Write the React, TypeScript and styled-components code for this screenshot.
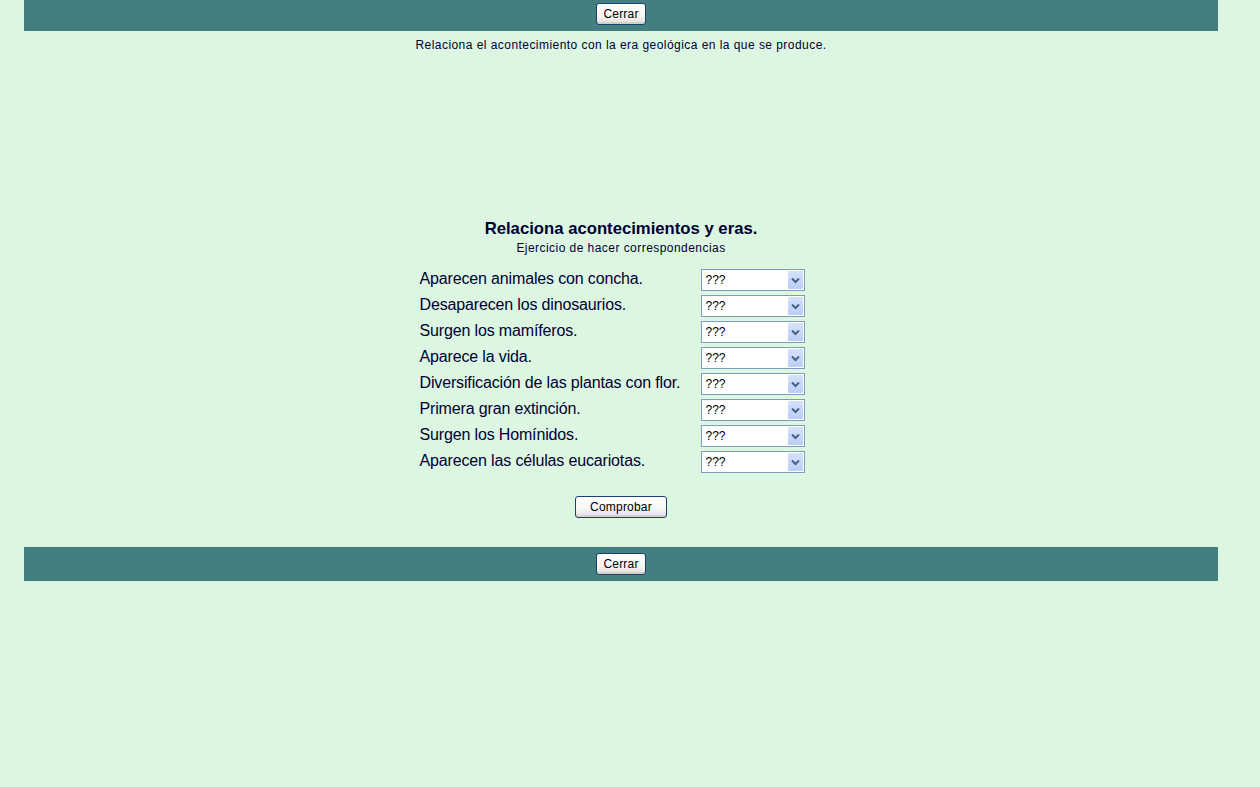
import React from "react";
import styled, { createGlobalStyle } from "styled-components";

const events = [
  "Aparecen animales con concha.",
  "Desaparecen los dinosaurios.",
  "Surgen los mamíferos.",
  "Aparece la vida.",
  "Diversificación de las plantas con flor.",
  "Primera gran extinción.",
  "Surgen los Homínidos.",
  "Aparecen las células eucariotas.",
];

const App = () => {
  return (
    <>
      <GlobalStyle />
      <Page>
        <Bar $height={31} $lift={3}>
          <XpButton $width={50}>Cerrar</XpButton>
        </Bar>
        <Instructions>
          Relaciona el acontecimiento con la era geológica en la que se produce.
        </Instructions>
        <Exercise>
          <Title>Relaciona acontecimientos y eras.</Title>
          <Subtitle>Ejercicio de hacer correspondencias</Subtitle>
          <MatchTable>
            {events.map((text) => (
              <React.Fragment key={text}>
                <EventText>{text}</EventText>
                <SelectBox>
                  <span>???</span>
                  <ArrowButton>
                    <svg width="9" height="7" viewBox="0 0 9 7">
                      <path
                        d="M1 1.5 L4.5 5 L8 1.5"
                        fill="none"
                        stroke="#4d6185"
                        strokeWidth="2"
                      />
                    </svg>
                  </ArrowButton>
                </SelectBox>
              </React.Fragment>
            ))}
          </MatchTable>
          <CheckRow>
            <XpButton $width={92}>Comprobar</XpButton>
          </CheckRow>
        </Exercise>
        <Bar $height={34} $lift={0}>
          <XpButton $width={50}>Cerrar</XpButton>
        </Bar>
      </Page>
    </>
  );
};

export default App;

const GlobalStyle = createGlobalStyle`
  html, body {
    margin: 0;
    padding: 0;
    background: #ddf6e2;
  }
  body {
    min-height: 787px;
    font-family: "Liberation Sans", Arial, sans-serif;
    color: #000033;
  }
`;

const Page = styled.div`
  width: 1194px;
  margin-left: 24px;
  display: flex;
  flex-direction: column;
`;

const Bar = styled.div<{ $height: number; $lift: number }>`
  height: ${({ $height }) => $height}px;
  background: #437f7e;
  display: flex;
  align-items: center;
  justify-content: center;
  padding-bottom: ${({ $lift }) => $lift}px;
  box-sizing: border-box;
`;

const XpButton = styled.button<{ $width: number }>`
  width: ${({ $width }) => $width}px;
  height: 22px;
  padding: 0;
  font-family: "Liberation Sans", Arial, sans-serif;
  font-size: 12px;
  letter-spacing: 0.2px;
  color: #000;
  border: 1px solid #1c3f74;
  border-radius: 3px;
  background: linear-gradient(#ffffff 0%, #f6f6f2 60%, #e2e0d6 100%);
  box-shadow: inset 0 -2px 0 #d6d0c4;
  cursor: pointer;
`;

const Instructions = styled.div`
  margin-top: 7px;
  text-align: center;
  font-size: 12px;
  line-height: 14px;
  letter-spacing: 0.45px;
`;

const Exercise = styled.div`
  margin-top: 167px;
  display: flex;
  flex-direction: column;
  align-items: center;
  padding-bottom: 29px;
`;

const Title = styled.div`
  font-size: 16.7px;
  font-weight: bold;
  line-height: 20px;
`;

const Subtitle = styled.div`
  font-size: 12px;
  line-height: 14px;
  margin-top: 2px;
  letter-spacing: 0.45px;
`;

const MatchTable = styled.div`
  margin-top: 14px;
  display: grid;
  grid-template-columns: 281px 104px;
  row-gap: 4px;
  padding-right: 18px;
`;

const EventText = styled.div`
  font-size: 16px;
  line-height: 22px;
  letter-spacing: -0.15px;
  margin-top: -1px;
`;

const SelectBox = styled.div`
  height: 22px;
  box-sizing: border-box;
  border: 1px solid #7f9db9;
  background: #fff;
  display: flex;
  align-items: center;
  justify-content: space-between;
  padding: 1px 1px 1px 4px;
  font-size: 12px;
  color: #000;
`;

const ArrowButton = styled.div`
  width: 15px;
  height: 18px;
  background: linear-gradient(#d6e2fb, #b9cdf6);
  border-radius: 1px;
  display: flex;
  align-items: center;
  justify-content: center;
`;

const CheckRow = styled.div`
  margin-top: 23px;
  display: flex;
  justify-content: center;
`;
